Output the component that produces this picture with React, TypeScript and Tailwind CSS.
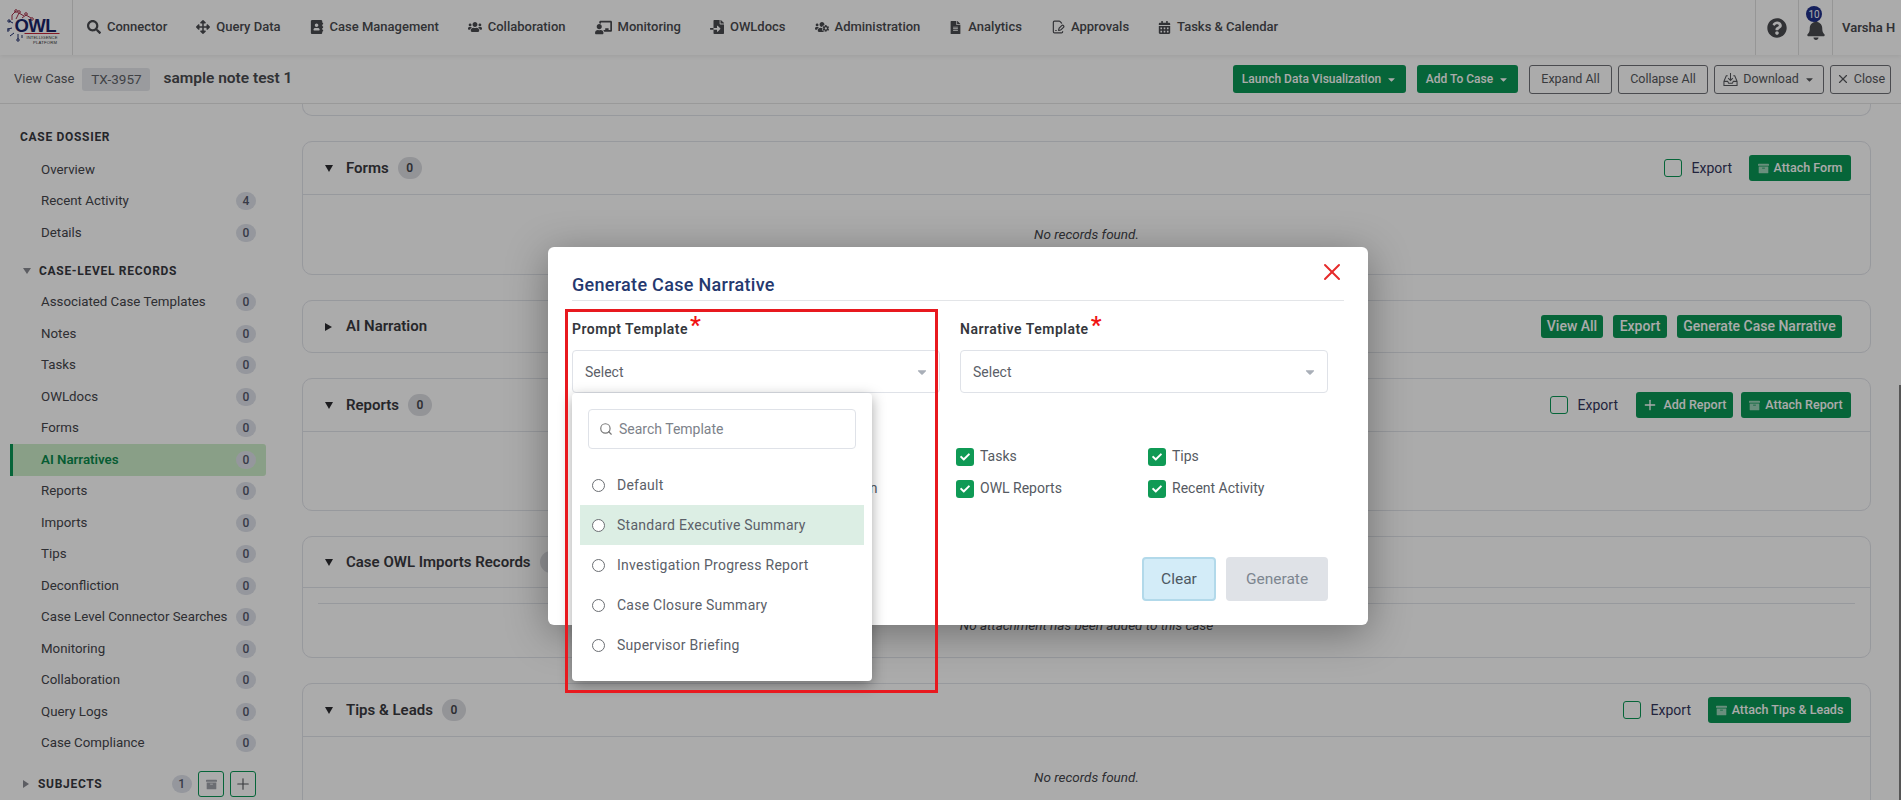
import React from 'react';
import { X, Plus, Search, FileSignature } from 'lucide-react';
import {
  FaSearch, FaArrowsAlt, FaAddressBook, FaUsers, FaChalkboardTeacher, FaFileImport, FaUsersCog,
  FaFileAlt, FaCalendarAlt, FaQuestionCircle, FaBell, FaArchive, FaCheck, FaCaretDown,
} from 'react-icons/fa';

const navItems = [
  { label: 'Connector', icon: FaSearch, size: 14 },
  { label: 'Query Data', icon: FaArrowsAlt, size: 14 },
  { label: 'Case Management', icon: FaAddressBook, size: 14 },
  { label: 'Collaboration', icon: FaUsers, size: 14 },
  { label: 'Monitoring', icon: FaChalkboardTeacher, size: 17 },
  { label: 'OWLdocs', icon: FaFileImport, size: 14 },
  { label: 'Administration', icon: FaUsersCog, size: 14 },
  { label: 'Analytics', icon: FaFileAlt, size: 13 },
  { label: 'Approvals', icon: FileSignature, size: 14 },
  { label: 'Tasks & Calendar', icon: FaCalendarAlt, size: 13 },
];

const dossier = [
  { label: 'Overview' },
  { label: 'Recent Activity', count: 4 },
  { label: 'Details', count: 0 },
];

const records = [
  'Associated Case Templates', 'Notes', 'Tasks', 'OWLdocs', 'Forms', 'AI Narratives', 'Reports', 'Imports', 'Tips',
  'Deconfliction', 'Case Level Connector Searches', 'Monitoring', 'Collaboration', 'Query Logs', 'Case Compliance',
];

const templates = ['Default', 'Standard Executive Summary', 'Investigation Progress Report', 'Case Closure Summary', 'Supervisor Briefing'];

const Logo = () => (
  <svg width="58" height="40" viewBox="0 0 58 40">
    <g fill="none" stroke="#a8324a" strokeWidth="1">
      <path d="M5 12 L5 7 L9 3 M9 11 L12 5 L17 8 M15 10 L19 7 L24 10" />
      <circle cx="9" cy="3" r="1.3" />
      <circle cx="12" cy="4" r="1.3" />
      <circle cx="19" cy="6" r="1.3" />
      <circle cx="25" cy="11" r="1.3" />
    </g>
    <g fill="none" stroke="#1c2a6b" strokeWidth="1">
      <path d="M6 15 L2 13 M5 20 L1 21 M7 25 L3 28 M11 26 L11 31 M15 27 L15 30" />
      <circle cx="2" cy="13" r="1.2" />
      <circle cx="1" cy="22" r="1.2" />
      <circle cx="11" cy="32" r="1.2" />
    </g>
    <path d="M17.5 25.5 L52.5 25.5" stroke="#c3283a" strokeWidth="1.2" />
    <text x="7.5" y="23.5" fontFamily="'Liberation Sans', sans-serif" fontWeight="900" fontSize="18.5" fill="#1a2468" textLength="42">OWL</text>
    <text x="19.5" y="31" fontFamily="'Liberation Sans', sans-serif" fontSize="4.2" fill="#333" textLength="31">INTELLIGENCE</text>
    <text x="26" y="35.5" fontFamily="'Liberation Sans', sans-serif" fontSize="4.2" fill="#333" textLength="24">PLATFORM</text>
  </svg>
);

const TrayDownload = () => (
  <svg width="15" height="15" viewBox="0 0 16 16" fill="none" stroke="currentColor" strokeWidth="1.1">
    <path d="M8 1v8M5.5 6.5 8 9l2.5-2.5M5 4H3.5L1 10v4.5h14V10l-2.5-6H11M1 10h4l1 2h4l1-2h4" />
  </svg>
);

const Count = ({ n }: { n: number }) => (
  <span className="flex h-[18px] w-[20px] items-center justify-center rounded-full bg-[#dfe2ea] text-[12px] font-medium text-[#54586a]">
    {n}
  </span>
);

const SideRow = ({ label, count, active }: { label: string; count?: number; active?: boolean }) => (
  <div
    className={`flex h-[31.5px] items-center justify-between rounded-r-[3px] pr-[10px] text-[13.3px] ${
      active
        ? 'border-l-[3px] border-[#0a9755] bg-[#cdeec9] pl-[28px] font-semibold text-[#0a8a4d]'
        : 'pl-[31px] text-[#45464c]'
    }`}
  >
    <span className="whitespace-nowrap">{label}</span>
    {count !== undefined && <Count n={count} />}
  </div>
);

const Caret = ({ open }: { open: boolean }) => (
  <span className={`inline-block w-0 h-0 border-transparent ${open ? 'border-x-[4px] border-t-[7px] border-t-[#2c2c30]' : 'border-y-[4px] border-l-[7px] border-l-[#2c2c30]'}`} />
);

const GreenBtn = ({ children, className = '' }: { children: React.ReactNode; className?: string }) => (
  <button className={`flex items-center justify-center gap-[5px] rounded-[3px] bg-[#0a9755] text-[12.5px] font-medium text-white whitespace-nowrap ${className}`}>
    {children}
  </button>
);

const AttachIcon = () => <FaArchive size={11} className="text-white/60" />;

const ExportCheck = () => (
  <label className="flex items-center gap-[10px] text-[14px] text-[#33365c]">
    <span className="h-[18px] w-[18px] rounded-[3px] border border-[#0a9755] bg-white" />
    Export
  </label>
);

const PanelHead = ({ title, count, open = true, children, border = true, height = 'h-[53px]' }: {
  title: string; count?: number; open?: boolean; children?: React.ReactNode; border?: boolean; height?: string;
}) => (
  <div className={`flex items-center pl-[22px] pr-[19px] ${height} ${border ? 'border-b border-[#e2e4ea]' : ''}`}>
    <span className="flex w-[21px]"><Caret open={open} /></span>
    <span className="text-[15px] font-semibold text-[#3a3a40]">{title}</span>
    {count !== undefined && (
      <span className="ml-[9px] flex h-[22px] w-[24px] items-center justify-center rounded-full bg-[#dcdde2] text-[12px] font-semibold text-[#45464c]">{count}</span>
    )}
    <div className="ml-auto flex items-center">{children}</div>
  </div>
);

const Empty = ({ text }: { text: string }) => <div className="text-center text-[13.5px] italic text-[#45464c]">{text}</div>;

const ModalCheck = ({ label, className = '' }: { label: string; className?: string }) => (
  <div className={`flex h-[18px] items-center gap-[6px] whitespace-nowrap text-[14px] text-[#555a62] ${className}`}>
    <span className="flex h-[18px] w-[18px] items-center justify-center rounded-[3px] bg-[#0f9a55] text-white">
      <FaCheck size={10} />
    </span>
    {label}
  </div>
);

const SelectBox = ({ label }: { label: string }) => (
  <div className="w-[368px]">
    <div className="flex h-[20px] items-center text-[14px] font-semibold tracking-[0.5px] text-[#35373c]">
      {label}
      <span className="relative -top-[5px] ml-[2px] text-[24px] leading-none text-[#f01414]">*</span>
    </div>
    <div className="mt-[10px] flex h-[43px] items-center justify-between rounded-[4px] border border-[#dfe2e8] pl-[12px] pr-[10px] pt-[2px] text-[14px] text-[#5b6068]">
      Select
      <FaCaretDown size={14} className="text-[#a9afb8]" />
    </div>
  </div>
);

export default function App() {
  return (
    <div className="relative h-[800px] w-full overflow-hidden bg-white font-['Roboto','Noto_Sans',sans-serif]">
      {/* Top nav */}
      <header className="relative z-10 flex h-[55px] items-center bg-white shadow-[0_2px_4px_rgba(0,0,0,0.06)]">
        <div className="flex h-full w-[73px] items-center justify-center border-r border-[#e0e0e0]">
          <Logo />
        </div>
        <nav className="flex items-center gap-[29px] pb-[1px] pl-[14px]">
          {navItems.map(({ label, icon: Icon, size }) => (
            <div key={label} className="flex items-center gap-[6px] whitespace-nowrap text-[13px] font-medium text-[#4a4b50]">
              <Icon size={size} />
              {label}
            </div>
          ))}
        </nav>
        <div className="ml-auto flex h-full items-stretch text-[#4a4b50]">
          <div className="flex w-[43px] items-center justify-center border-l border-[#e0e0e0]">
            <FaQuestionCircle size={20} />
          </div>
          <div className="relative flex w-[34px] items-center justify-center border-l border-[#e0e0e0]">
            <FaBell size={20} className="mt-[5px]" />
            <span className="absolute left-[7px] top-[6px] flex h-[16px] w-[16px] items-center justify-center rounded-full bg-[#20308a] text-[10px] text-white">10</span>
          </div>
          <div className="flex w-[69px] items-center border-l border-[#e0e0e0] pl-[9px] text-[13px] font-semibold whitespace-nowrap">Varsha H</div>
        </div>
      </header>

      {/* Case bar */}
      <div className="flex h-[49px] items-center border-b border-[#e4e4e4] bg-white pl-[14px] pr-[10px]">
        <span className="text-[13px] text-[#5a5c62]">View Case</span>
        <span className="ml-[8px] flex h-[23px] w-[68px] items-center justify-center rounded-[3px] bg-[#e6e8ec] text-[13.5px] text-[#5f6268]">TX-3957</span>
        <span className="ml-[13px] text-[15.5px] font-semibold text-[#4a4b50]">sample note test 1</span>
        <div className="ml-auto flex items-center text-[12.5px] text-[#55575c]">
          <GreenBtn className="h-[28px] w-[173px] !text-[12px]">Launch Data Visualization <FaCaretDown size={11} /></GreenBtn>
          <GreenBtn className="ml-[11px] h-[28px] w-[101px] !text-[12px]">Add To Case <FaCaretDown size={11} /></GreenBtn>
          <button className="ml-[11px] h-[29px] w-[83px] rounded-[3px] border border-[#6f7176]">Expand All</button>
          <button className="ml-[6px] h-[29px] w-[90px] rounded-[3px] border border-[#6f7176]">Collapse All</button>
          <button className="ml-[6px] flex h-[29px] w-[110px] items-center justify-center gap-[5px] rounded-[3px] border border-[#6f7176]"><TrayDownload /> Download <FaCaretDown size={11} /></button>
          <button className="ml-[6px] flex h-[29px] w-[61px] items-center justify-center gap-[4px] rounded-[3px] border border-[#6f7176]"><X size={14} /> Close</button>
        </div>
      </div>

      <div className="flex">
        {/* Sidebar */}
        <aside className="w-[302px] shrink-0 pl-[10px] pr-[36px] pt-[26px]">
          <div className="flex h-[14px] items-center pl-[10px] text-[12px] font-bold tracking-[0.7px] text-[#38393f]">CASE DOSSIER</div>
          <div className="mt-[10px]">
            {dossier.map((d) => <SideRow key={d.label} label={d.label} count={d.count} />)}
          </div>
          <div className="mt-[15px] flex h-[14px] items-center pl-[13px] text-[12px] font-bold tracking-[0.7px] text-[#38393f]">
            <span className="mr-[8px] inline-block h-0 w-0 border-x-[4px] border-t-[6px] border-x-transparent border-t-[#8a8b92]" />
            CASE-LEVEL RECORDS
          </div>
          <div className="mt-[9px]">
            {records.map((r) => <SideRow key={r} label={r} count={0} active={r === 'AI Narratives'} />)}
          </div>
          <div className="mt-[12px] flex h-[26px] items-center pl-[13px] pr-[10px] text-[12px] font-bold tracking-[0.7px] text-[#38393f]">
            <span className="mr-[9px] inline-block h-0 w-0 border-y-[4px] border-l-[6px] border-y-transparent border-l-[#8a8b92]" />
            SUBJECTS
            <span className="ml-auto"><Count n={1} /></span>
            <span className="ml-[6px] flex h-[26px] w-[26px] items-center justify-center rounded-[3px] border border-[#0a9755] text-[#a0a3ab]"><FaArchive size={11} /></span>
            <span className="ml-[6px] flex h-[26px] w-[26px] items-center justify-center rounded-[3px] border border-[#0a9755] text-[#55575c]"><Plus size={18} strokeWidth={1.5} /></span>
          </div>
        </aside>

        {/* Panels */}
        <main className="flex min-w-0 flex-1 flex-col gap-[25px] pr-[30px] text-[#45464c]">
          <div className="h-[12px] rounded-b-[10px] border-x border-b border-[#e2e4ea]" />
          <section className="h-[134px] rounded-[10px] border border-[#e2e4ea]">
            <PanelHead title="Forms" count={0}>
              <ExportCheck />
              <GreenBtn className="ml-[17px] h-[26px] w-[102px]"><AttachIcon /> Attach Form</GreenBtn>
            </PanelHead>
            <div className="pt-[29px]"><Empty text="No records found." /></div>
          </section>
          <section className="h-[53px] rounded-[10px] border border-[#e2e4ea]">
            <PanelHead title="AI Narration" open={false} border={false} height="h-[51px]">
              <GreenBtn className="h-[23px] w-[62px] !text-[14px]">View All</GreenBtn>
              <GreenBtn className="ml-[10px] h-[23px] w-[54px] !text-[14px]">Export</GreenBtn>
              <GreenBtn className="ml-[10px] mr-[9px] h-[23px] w-[165px] !text-[14px]">Generate Case Narrative</GreenBtn>
            </PanelHead>
          </section>
          <section className="h-[133px] rounded-[10px] border border-[#e2e4ea]">
            <PanelHead title="Reports" count={0}>
              <ExportCheck />
              <GreenBtn className="ml-[18px] h-[26px] w-[97px]"><Plus size={16} /> Add Report</GreenBtn>
              <GreenBtn className="ml-[8px] h-[26px] w-[110px]"><AttachIcon /> Attach Report</GreenBtn>
            </PanelHead>
          </section>
          <section className="h-[122px] rounded-[10px] border border-[#e2e4ea]">
            <PanelHead title="Case OWL Imports Records" count={0} height="h-[51px]" />
            <div className="mx-[15px] mt-[15px] border-t border-[#e2e4ea] pt-[11px]">
              <Empty text="No attachment has been added to this case" />
            </div>
          </section>
          <section className="h-[134px] rounded-[10px] border border-[#e2e4ea]">
            <PanelHead title="Tips & Leads" count={0}>
              <ExportCheck />
              <GreenBtn className="ml-[17px] h-[26px] w-[143px]"><AttachIcon /> Attach Tips &amp; Leads</GreenBtn>
            </PanelHead>
            <div className="pt-[30px]"><Empty text="No records found." /></div>
          </section>
        </main>
      </div>

      {/* Backdrop */}
      <div className="absolute inset-0 z-20 bg-black/[0.33]" />
      <div className="absolute right-0 top-[385px] z-20 h-[415px] w-[2px] bg-[#555]" />

      {/* Modal */}
      <div className="absolute left-[548px] top-[247px] z-30 h-[378px] w-[820px] rounded-[6px] bg-white px-[24px] shadow-[0_8px_40px_rgba(0,0,0,0.35)]">
        <div className="relative flex h-[53.5px] items-end border-b border-[#e3e5e8] pb-[3px]">
          <span className="text-[18px] font-medium leading-[24px] tracking-[0.3px] text-[#25396f]">Generate Case Narrative</span>
          <X size={28} strokeWidth={1.7} className="absolute right-[-2px] top-[11px] text-[#e62b2b]" />
        </div>
        <div className="mt-[19px] flex gap-[20px]">
          <SelectBox label="Prompt Template" />
          <SelectBox label="Narrative Template" />
        </div>
        <div className="mt-[55px] grid grid-cols-[192px_192px_192px_192px] gap-y-[14px]">
          <ModalCheck label="Notes" />
          <ModalCheck label="Forms" />
          <ModalCheck label="Tasks" />
          <ModalCheck label="Tips" />
          <ModalCheck label="Imports" />
          <ModalCheck label="Deconfliction" className="tracking-[0.6px]" />
          <ModalCheck label="OWL Reports" />
          <ModalCheck label="Recent Activity" />
        </div>
        <div className="mt-[59px] flex justify-end gap-[10px] pr-[16px]">
          <button className="h-[44px] w-[74px] rounded-[4px] border-2 border-[#b2d9ea] bg-[#d3ecf8] pt-[2px] text-[15.5px] text-[#4d5862]">Clear</button>
          <button className="h-[44px] w-[102px] rounded-[4px] bg-[#dfe2e7] pt-[2px] text-[15.5px] text-[#7d8690]">Generate</button>
        </div>

        {/* Prompt template dropdown */}
        <div className="absolute left-[24px] top-[146px] h-[288px] w-[300px] rounded-[4px] bg-white px-[8px] pt-[16px] shadow-[0_4px_14px_rgba(0,0,0,0.35)]">
          <div className="mx-[8px] flex h-[40px] items-center rounded-[4px] border border-[#dfe2e8] pl-[10px] text-[14px] text-[#7d828a]">
            <Search size={14} className="mr-[6px] text-[#777]" />
            Search Template
          </div>
          <ul className="mt-[16px]">
            {templates.map((t) => (
              <li key={t} className={`flex h-[40px] items-center pl-[12px] text-[14px] tracking-[0.25px] text-[#5b6068] ${t === 'Standard Executive Summary' ? 'bg-[#dceee4]' : ''}`}>
                <span className="mr-[12px] h-[13px] w-[13px] rounded-full border border-[#6b6e73] bg-white" />
                {t}
              </li>
            ))}
          </ul>
        </div>
      </div>

      {/* Annotation */}
      <div className="pointer-events-none absolute left-[565px] top-[309px] z-40 h-[384px] w-[373px] border-[3px] border-[#e8191f]" />
    </div>
  );
}
